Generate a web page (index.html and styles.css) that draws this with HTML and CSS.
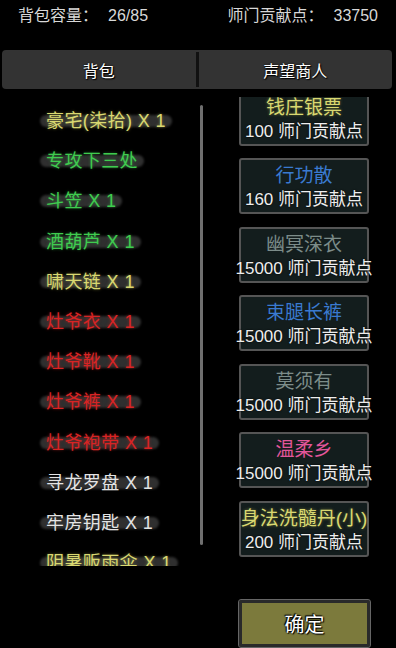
FILE: index.html
```html
<!DOCTYPE html>
<html>

<head>
    <meta name="viewport" content="width=device-width,initial-scale=1.0">
    <title>声望商人</title>
    <link rel="stylesheet" href="styles.css">
</head>

<body>
    <div class="topInfo">
        <span>背包容量：<span class="num">26/85</span></span>
        <span>师门贡献点：<span class="num">33750</span></span>
    </div>

    <div class="tabs">
        <div class="tab">背包</div>
        <div class="tabLine"></div>
        <div class="tab">声望商人</div>
    </div>

    <div class="main">
        <ul class="bag">
            <li class="yellow"><span>豪宅(柒拾) X 1</span></li>
            <li class="green"><span>专攻下三处</span></li>
            <li class="green"><span>斗笠 X 1</span></li>
            <li class="green"><span>酒葫芦 X 1</span></li>
            <li class="yellow"><span>啸天链 X 1</span></li>
            <li class="red"><span>灶爷衣 X 1</span></li>
            <li class="red"><span>灶爷靴 X 1</span></li>
            <li class="red"><span>灶爷裤 X 1</span></li>
            <li class="red"><span>灶爷袍带 X 1</span></li>
            <li class="white"><span>寻龙罗盘 X 1</span></li>
            <li class="white"><span>牢房钥匙 X 1</span></li>
            <li class="yellow"><span>阴暑贩雨伞 X 1</span></li>
        </ul>

        <div class="scrollLine"></div>

        <div class="shop">
            <div class="shopInner">
                <div class="card"><div class="title yellow">钱庄银票</div><div class="price">100 师门贡献点</div></div>
                <div class="card"><div class="title blue">行功散</div><div class="price">160 师门贡献点</div></div>
                <div class="card"><div class="title gray">幽冥深衣</div><div class="price">15000 师门贡献点</div></div>
                <div class="card"><div class="title blue">束腿长裤</div><div class="price">15000 师门贡献点</div></div>
                <div class="card"><div class="title gray">莫须有</div><div class="price">15000 师门贡献点</div></div>
                <div class="card"><div class="title pink">温柔乡</div><div class="price">15000 师门贡献点</div></div>
                <div class="card"><div class="title yellow">身法洗髓丹(小)</div><div class="price">200 师门贡献点</div></div>
            </div>
        </div>
    </div>

    <div class="bottom">
        <button class="okBtn">确定</button>
    </div>
</body>

</html>
```

FILE: styles.css
```css
body {
    margin: 0;
    background: #000;
    color: #ddd;
    font-family: "Liberation Sans", "Noto Sans CJK SC", sans-serif;
    width: 396px;
    height: 648px;
    overflow: hidden;
}

.topInfo {
    display: flex;
    justify-content: space-between;
    padding: 5px 18px 0 18px;
    height: 45px;
    font-size: 16px;
    line-height: 22px;
    color: #d8d8d8;
}

.topInfo .num {
    margin-left: 10px;
}

.tabs {
    display: flex;
    align-items: center;
    margin: 0 4px 0 2px;
    height: 39px;
    background: #333;
    border-radius: 4px;
}

.tab {
    flex: 1;
    text-align: center;
    font-size: 16px;
    color: #fff;
    text-shadow: 0 0 2px #000, 1px 1px 1px #000;
}

.tabLine {
    width: 3px;
    height: 35px;
    background: #111;
}

.main {
    display: flex;
    margin-top: 8px;
}

.bag {
    list-style-type: none;
    margin: 0;
    padding: 4px 0 0 0;
    width: 200px;
    height: 465px;
    overflow: hidden;
}

.bag>li {
    height: 40.2px;
    line-height: 40px;
    padding-left: 46px;
    font-size: 18px;
    letter-spacing: 0.4px;
}

.bag>li>span {
    position: relative;
    z-index: 1;
}

/* grey blurry pill behind each item name */
.bag>li>span::before {
    content: "";
    position: absolute;
    left: -6px;
    right: -6px;
    top: 4px;
    height: 12px;
    border-radius: 6px;
    background: #2f2f2f;
    filter: blur(1px);
    z-index: -1;
}

.scrollLine {
    width: 3px;
    height: 440px;
    margin-top: 8px;
    background: #6f6f6f;
    border-radius: 2px;
}

.shop {
    flex: 1;
    height: 470px;
    overflow: hidden;
}

.shopInner {
    display: flex;
    flex-direction: column;
    align-items: center;
    gap: 12.6px;
    margin-top: -7.5px;
    padding-left: 9px;
}

.card {
    width: 126px;
    height: 48px;
    padding-top: 4px;
    background: #131d1d;
    border: 2px solid #555;
    border-radius: 3px;
    text-align: center;
    font-size: 17px;
    line-height: 24px;
    white-space: nowrap;
    display: flex;
    flex-direction: column;
    align-items: center;
}

.title {
    font-size: 19px;
}

.price {
    color: #eee;
    text-shadow: 0 0 2px #000;
}

.yellow {
    color: #d9d871;
    text-shadow: 0 0 3px rgba(200, 200, 80, 0.5);
}

.green {
    color: #3fcc4f;
    text-shadow: 0 0 3px rgba(60, 200, 80, 0.5);
}

.red {
    color: #d82424;
    text-shadow: 0 0 3px rgba(220, 30, 30, 0.5);
}

.white {
    color: #e4e4e4;
}

.blue {
    color: #3a7ad0;
}

.gray {
    color: #7c8c89;
}

.pink {
    color: #e2569a;
}

.bottom {
    display: flex;
    justify-content: flex-end;
    padding: 33px 26px 0 0;
}

.okBtn {
    width: 131px;
    height: 47px;
    background: #7c7a3c;
    border: 3px solid #2a2a2a;
    outline: 1px solid #666;
    border-radius: 2px;
    font-family: "Liberation Sans", "Noto Sans CJK SC", sans-serif;
    font-size: 20px;
    color: #fff;
    text-shadow: 0 0 2px #000, 1px 1px 1px #000, -1px -1px 1px #000;
    padding: 0;
}
```
